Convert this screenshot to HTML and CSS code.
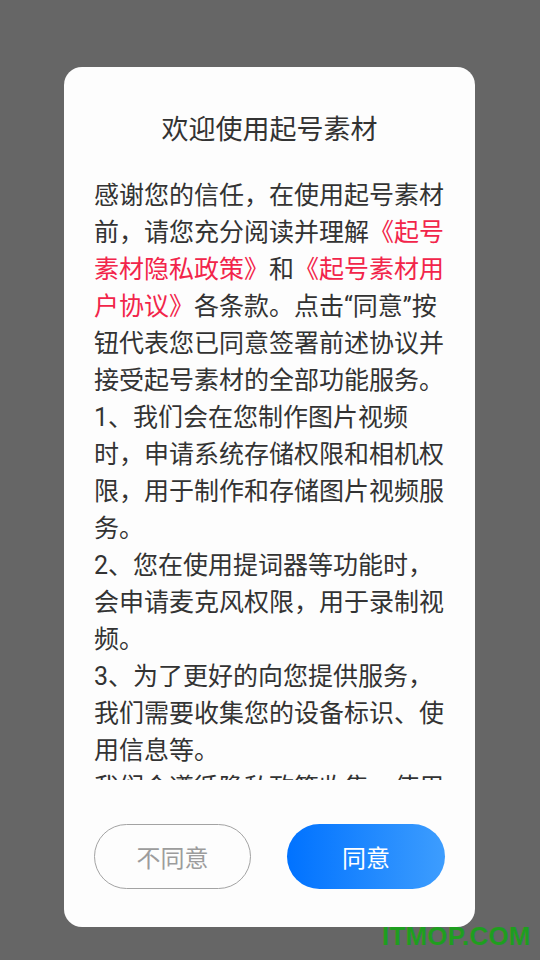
FILE: index.html
```html
<!DOCTYPE html>
<html lang="zh-CN">
<head>
<meta charset="utf-8">
<link rel="stylesheet" href="styles.css">
</head>
<body>
<div class="card">
  <div class="title">欢迎使用起号素材</div>
  <div class="scroll">
    <p>感谢您的信任，在使用起号素材前，请您充分阅读并理解<span class="link">《起号素材隐私政策》</span>和<span class="link">《起号素材用户协议》</span>各条款。点击“同意”按钮代表您已同意签署前述协议并接受起号素材的全部功能服务。</p>
    <p>1、我们会在您制作图片视频时，申请系统存储权限和相机权限，用于制作和存储图片视频服务。</p>
    <p>2、您在使用提词器等功能时，会申请麦克风权限，用于录制视频。</p>
    <p>3、为了更好的向您提供服务，我们需要收集您的设备标识、使用信息等。</p>
    <p>我们会遵循隐私政策收集、使用您的信息，并采取严格的安全措施保护您的个人信息安全。</p>
  </div>
  <div class="actions">
    <div class="btn btn-ghost">不同意</div>
    <div class="btn btn-primary">同意</div>
  </div>
</div>
<div class="watermark">ITMOP.COM</div>
</body>
</html>
```

FILE: styles.css
```css
html, body {
  margin: 0;
  padding: 0;
}
body {
  background: #666666;
  width: 540px;
  height: 960px;
  overflow: hidden;
  position: relative;
  font-family: Roboto, "Noto Sans CJK SC", sans-serif;
}
.card {
  box-sizing: border-box;
  margin: 67px 0 0 64px;
  width: 411px;
  height: 860px;
  background: #fdfdfd;
  border-radius: 18px;
  padding: 45px 30px 38px 30px;
  display: flex;
  flex-direction: column;
}
.title {
  font-size: 27px;
  line-height: 36px;
  height: 36px;
  text-align: center;
  color: #333333;
}
.scroll {
  margin-top: 29px;
  flex: 1;
  overflow: hidden;
  color: #333333;
  font-size: 25px;
  line-height: 37px;
  width: 351px;
}
.scroll p {
  margin: 0;
}
.link {
  color: #f2254a;
}
.actions {
  margin-top: 44px;
  display: flex;
  justify-content: space-between;
  width: 351px;
}
.btn {
  box-sizing: border-box;
  width: 157px;
  height: 65px;
  border-radius: 33px;
  display: flex;
  align-items: center;
  justify-content: center;
  font-size: 24px;
}
.btn-ghost {
  border: 1.5px solid #a3a3a3;
  color: #9c9c9c;
}
.btn-primary {
  width: 158px;
  background: linear-gradient(90deg, #0072ff 0%, #3d9dfe 100%);
  color: #ffffff;
}
.watermark {
  position: absolute;
  left: 382px;
  top: 921px;
  font-family: "Liberation Sans", Arial, sans-serif;
  font-weight: bold;
  font-size: 26px;
  color: #1f9e1f;
  letter-spacing: 0.2px;
}
```
